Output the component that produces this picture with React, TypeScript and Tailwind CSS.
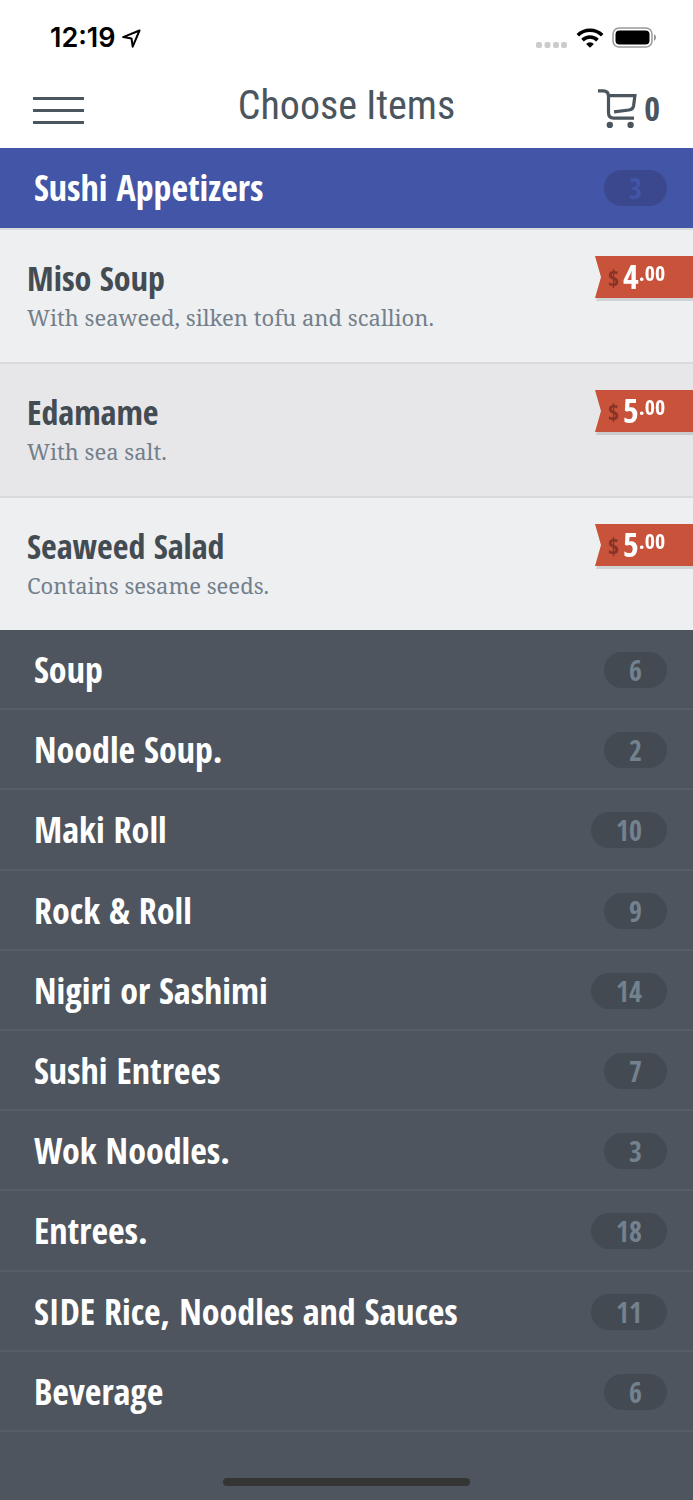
import { useState } from "react";

const openItems = [
  { name: "Miso Soup", desc: "With seaweed, silken tofu and scallion.", dollars: "4", cents: ".00" },
  { name: "Edamame", desc: "With sea salt.", dollars: "5", cents: ".00" },
  { name: "Seaweed Salad", desc: "Contains sesame seeds.", dollars: "5", cents: ".00" },
];

const categories = [
  { name: "Soup", count: 6 },
  { name: "Noodle Soup.", count: 2 },
  { name: "Maki Roll", count: 10 },
  { name: "Rock & Roll", count: 9 },
  { name: "Nigiri or Sashimi", count: 14 },
  { name: "Sushi Entrees", count: 7 },
  { name: "Wok Noodles.", count: 3 },
  { name: "Entrees.", count: 18 },
  { name: "SIDE Rice, Noodles and Sauces", count: 11 },
  { name: "Beverage", count: 6 },
];

function StatusBar() {
  return (
    <div className="flex h-[76px] items-center justify-between pl-[50px] pr-9">
      <div className="flex items-center gap-1.5 text-black">
        <span className="font-['Inter',sans-serif] text-[27px] leading-8 font-semibold">12:19</span>
        <svg width="19" height="19" viewBox="0 0 19 19" fill="none" stroke="currentColor" strokeWidth="2" strokeLinejoin="round" aria-hidden="true">
          <path d="M17.5 1.5 1.2 8.1l8.3 1.4 1.2 8.2z" />
        </svg>
      </div>
      <div className="flex items-center gap-2">
        <svg width="32" height="22" viewBox="0 0 32 22" fill="#cccccc" aria-hidden="true">
          <rect x="0" y="15" width="6" height="6" rx="2" />
          <rect x="8.5" y="15" width="6" height="6" rx="2" />
          <rect x="17" y="15" width="6" height="6" rx="2" />
          <rect x="25" y="15" width="6" height="6" rx="2" />
        </svg>
        <svg width="28" height="20" viewBox="0 0 27 20" fill="none" stroke="#000" strokeWidth="3.6" aria-hidden="true">
          <path d="M1.3 7.2a17.4 17.4 0 0 1 24.4 0" />
          <path d="M6 12.1a10.8 10.8 0 0 1 15 0" />
          <path d="M13.5 19.8 9.6 15.9a5.6 5.6 0 0 1 7.8 0z" fill="#000" stroke="none" />
        </svg>
        <svg width="45" height="22" viewBox="0 0 45 22" aria-hidden="true">
          <rect x="1" y="1" width="39" height="19" rx="6" fill="none" stroke="#999" strokeWidth="1.5" />
          <rect x="3.5" y="3.5" width="34" height="14" rx="4" fill="#000" />
          <path d="M42 7.2c2.6 1.2 2.6 5.4 0 6.6z" fill="#8f8f8f" />
        </svg>
      </div>
    </div>
  );
}

function CartIcon() {
  return (
    <svg width="40" height="40" viewBox="0 0 40 40" fill="none" stroke="currentColor" strokeWidth="3.2" aria-hidden="true">
      <path d="M0 2.9h5.2c3.4 0 5.3 2.2 5.3 5.4v16.5c0 3.6 1.8 5.3 5.2 5.3H36" />
      <path d="M10.5 7.6h26.4l-1.3 10.2c-.4 2.6-1.8 3.9-4.6 4.2l-15 1.8" />
      <circle cx="11.8" cy="37" r="3.2" fill="currentColor" stroke="none" />
      <circle cx="32.6" cy="37" r="3.2" fill="currentColor" stroke="none" />
    </svg>
  );
}

function CountPill({ count, active }: { count: number; active?: boolean }) {
  return (
    <span
      className={`rounded-full px-[25px] text-[28px] leading-9 font-bold ${
        active ? "bg-[#3b488d] text-[#4355a6]" : "bg-[#434a52] text-[#74818e]"
      }`}
    >
      {count}
    </span>
  );
}

function PriceTag({ dollars, cents }: { dollars: string; cents: string }) {
  return (
    <div className="w-[98px] drop-shadow-[1px_3px_0px_rgba(0,0,0,0.12)]">
      <div className="flex h-[42px] items-start bg-[#c9523a] pl-[13px] font-bold text-white [clip-path:polygon(0_0,100%_0,100%_100%,0_100%,6px_50%)]">
        <span className="pt-2 pr-1 text-[24px] leading-7 text-[#843528]">$</span>
        <span className="pt-0.5 text-[34px] leading-9">{dollars}</span>
        <span className="pt-1 text-[22px] leading-6">{cents}</span>
      </div>
    </div>
  );
}

export default function App() {
  const [open, setOpen] = useState(true);

  return (
    <div className="flex min-h-screen flex-col bg-[#4e555e] font-['Open_Sans_Condensed','Roboto_Condensed',sans-serif]">
      <header className="bg-white text-[#4b555e]">
        <StatusBar />
        <div className="grid h-[72px] grid-cols-[1fr_auto_1fr] items-center pr-[33px] pl-[33px] pb-3">
          <button aria-label="Menu" className="mt-2 flex w-[51px] flex-col gap-[9px]">
            <span className="h-[3px] w-full bg-current" />
            <span className="h-[3px] w-full bg-current" />
            <span className="h-[3px] w-full bg-current" />
          </button>
          <h1 className="font-['Roboto_Condensed',sans-serif] text-[40px] leading-[48px]">Choose Items</h1>
          <button aria-label="Cart, 0 items" className="mt-1 flex items-center gap-1.5 justify-self-end">
            <CartIcon />
            <span className="text-[34px] leading-9 font-bold">0</span>
          </button>
        </div>
      </header>

      <main className="flex flex-1 flex-col">
        <button
          onClick={() => setOpen(!open)}
          aria-expanded={open}
          className="flex h-20 items-center justify-between bg-[#4355a6] pr-[26px] pl-[34px] text-left"
        >
          <span className="text-[36px] leading-10 font-bold text-white">Sushi Appetizers</span>
          <CountPill count={3} active />
        </button>

        {open && (
          <ul>
            {openItems.map((item) => (
              <li
                key={item.name}
                className="flex items-start justify-between border-t-2 border-[#d9dadc] bg-[#eeeff1] pt-[26px] pb-7 pl-[27px] even:bg-[#e7e7e9]"
              >
                <div>
                  <h2 className="text-[34px] leading-[44px] font-bold text-[#434b53]">{item.name}</h2>
                  <p className="font-['Noto_Serif',serif] text-[22px] leading-[34px] text-[#73808c]">{item.desc}</p>
                </div>
                <PriceTag dollars={item.dollars} cents={item.cents} />
              </li>
            ))}
          </ul>
        )}

        <div className="grid flex-1 auto-rows-fr">
          {categories.map((category) => (
            <button
              key={category.name}
              className="flex min-h-20 items-center justify-between border-b-2 border-[#565e67] pt-0.5 pr-[26px] pl-[34px] text-left"
            >
              <span className="text-[36px] leading-10 font-bold text-white">{category.name}</span>
              <CountPill count={category.count} />
            </button>
          ))}
        </div>
      </main>

      <footer className="flex h-[68px] items-end justify-center pb-[14px]">
        <div className="h-2 w-[247px] rounded-full bg-[#353535]" />
      </footer>
    </div>
  );
}
